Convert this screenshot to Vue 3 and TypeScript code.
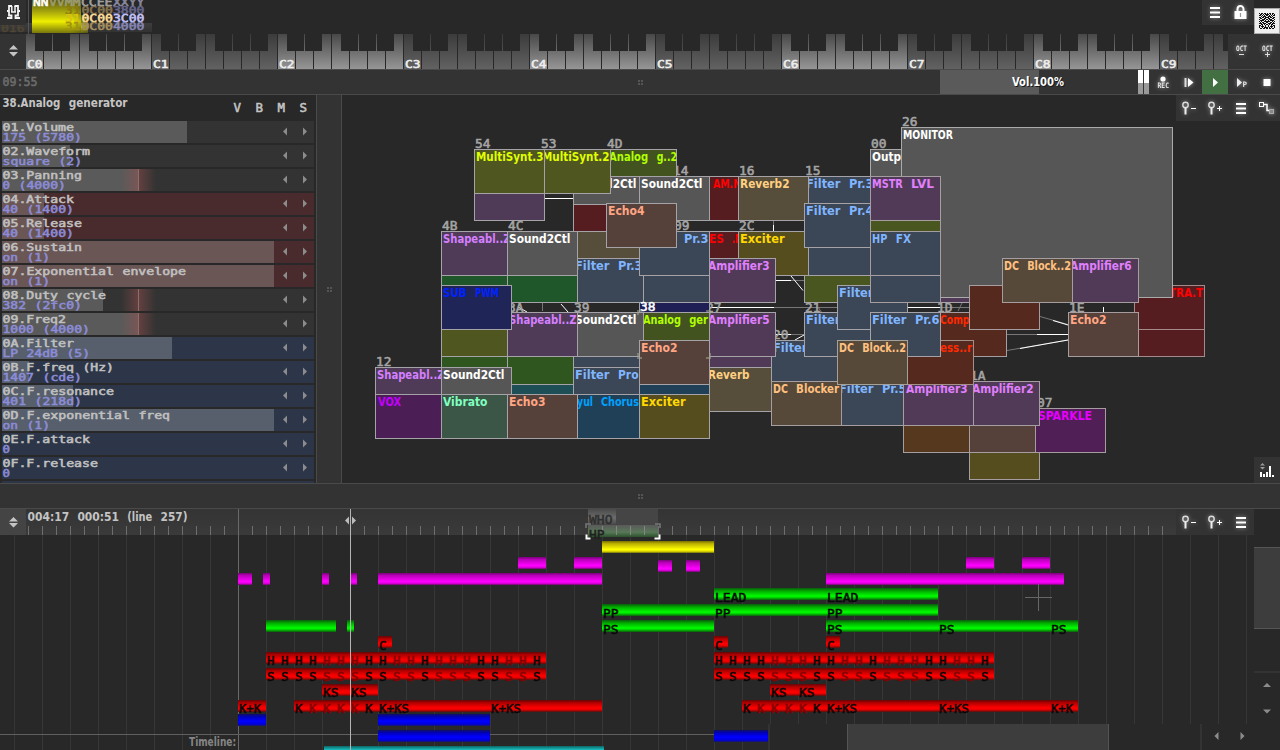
<script setup lang="ts">
import { h } from 'vue'

/* ---------- pixel-like text: every word is fitted to the bitmap font's advance widths ---------- */
type Kind = 'prop' | 'mono' | 'wide'
interface PxProps { t: string; x: number; y: number; kind?: Kind; fill?: string; w?: number }

const narrow: Record<string, number> = { i: 4, l: 4, I: 5, '.': 3, ':': 3, '(': 4, ')': 4, t: 6, f: 6, r: 6, k: 6 }
function advance(c: string, kind: Kind): number {
  if (kind !== 'prop') return 8
  if (narrow[c]) return narrow[c]
  return c >= 'a' && c <= 'z' && c !== 'm' ? 7 : 8
}
function words(t: string, kind: Kind) {
  const out: { t: string; x: number; w: number }[] = []
  let x = 0
  for (const part of t.split(' ')) {
    let w = 0
    for (const c of part) w += advance(c, kind)
    if (part) out.push({ t: part, x, w: w - 0.5 })
    x += w + 8
  }
  return out
}
const Px = (p: PxProps) => {
  const kind: Kind = p.kind ?? 'prop'
  const list = words(p.t, kind)
  const last = list[list.length - 1]
  const k = p.w ? p.w / (last.x + last.w) : 1
  const fill = p.fill ?? '#c4c4c4'
  return h('g', { class: 'px px-' + kind, fill, stroke: kind === 'prop' ? 'none' : fill },
    list.map(o => h('text', { x: p.x + o.x * k, y: p.y, textLength: o.w * k, lengthAdjust: 'spacingAndGlyphs' }, o.t)))
}
Px.props = ['t', 'x', 'y', 'kind', 'fill', 'w']

/* ---------- keyboard ---------- */
const octaves = Array.from({ length: 10 }, (_, i) => i)
const blacks = [9, 27, 63, 81, 99]

/* ---------- controllers ---------- */
const params = [
  { n: '01.Volume', v: '175 (5780)', f: 185, c: 'gray' },
  { n: '02.Waveform', v: 'square (2)', f: 68, c: 'gray' },
  { n: '03.Panning', v: '0 (4000)', f: 137, c: 'gray', mid: true },
  { n: '04.Attack', v: '40 (1400)', f: 42, c: 'red' },
  { n: '05.Release', v: '40 (1400)', f: 42, c: 'red' },
  { n: '06.Sustain', v: 'on (1)', f: 272, c: 'red' },
  { n: '07.Exponential envelope', v: 'on (1)', f: 272, c: 'red' },
  { n: '08.Duty cycle', v: '382 (2fc0)', f: 101, c: 'gray', mid: true },
  { n: '09.Freq2', v: '1000 (4000)', f: 137, c: 'gray', mid: true },
  { n: '0A.Filter', v: 'LP 24dB (5)', f: 170, c: 'blue' },
  { n: '0B.F.freq (Hz)', v: '1407 (cde)', f: 27, c: 'blue' },
  { n: '0C.F.resonance', v: '401 (218d)', f: 71, c: 'blue' },
  { n: '0D.F.exponential freq', v: 'on (1)', f: 272, c: 'blue' },
  { n: '0E.F.attack', v: '0', f: 0, c: 'blue' },
  { n: '0F.F.release', v: '0', f: 0, c: 'blue' },
  { n: '', v: '', f: 0, c: 'blue' },
]

/* ---------- module map, back to front ---------- */
const P: Record<string, [string, string]> = {
  pur: ['#4f3a57', '#d580ff'], pnk: ['#513a57', '#e080ff'], gry: ['#565656', '#ffffff'], slt: ['#3b4656', '#80b5ff'],
  red: ['#561d20', '#ff0000'], oli: ['#4f561f', '#e0ff00'], grn: ['#43531f', '#b0ff00'], dgr: ['#1f562a', '#40ff60'],
  mgr: ['#30561f', '#60ff20'], ogr: ['#49561f', '#c0ff00'], bro: ['#564d3b', '#ffd080'], dcb: ['#56493a', '#ffc080'],
  ech: ['#56413a', '#ffa583'], blu: ['#1f2556', '#0022ff'], nav: ['#1f1f56', '#0000ff'], vox: ['#4b1f56', '#c400ff'],
  vib: ['#3b5647', '#80ffc0'], cho: ['#1f4056', '#00a0ff'], tea: ['#1f4f56', '#00e0ff'], exc: ['#564d1f', '#ffd900'],
  cmp: ['#56291f', '#ff2a00'], org: ['#56381f', '#ff8000'], spk: ['#4f1f56', '#e600ff'],
}
type Node = [x: number, y: number, kind: string, text?: string, dx?: number, w?: number]
const nodes: Node[] = [
  [474, 176, 'pur'], [672, 176, 'red', 'AM.N', 41, 28], [672, 231, 'red', 'ES .N', 37, 33],
  [804, 258, 'ogr'], [804, 231, 'slt'], [804, 176, 'slt', 'Filter Pr.3'], [738, 231, 'exc', 'Exciter'],
  [738, 176, 'bro', 'Reverb2'], [804, 203, 'slt', 'Filter Pr.4'],
  [705, 340, 'pnk'], [705, 367, 'bro', 'Reverb', 3],
  [771, 340, 'slt', 'Filter'], [804, 312, 'slt', 'Filter'], [837, 285, 'slt', 'Filter'],
  [606, 149, 'grn', 'Analog g..2', 3, 68], [573, 176, 'gry', 'Sound2Ctl'], [573, 204, 'red'], [573, 231, 'bro'],
  [540, 149, 'oli', 'MultiSynt.2'], [474, 149, 'oli', 'MultiSynt.3'], [639, 176, 'gry', 'Sound2Ctl'],
  [705, 258, 'pnk', 'Amplifier3', 3], [639, 258, 'slt'], [573, 258, 'slt', 'Filter Pr.3'], [639, 231, 'slt', 'Filter Pr.3'],
  [606, 203, 'ech', 'Echo4'],
  [441, 258, 'dgr'], [507, 258, 'dgr'], [441, 231, 'pur', 'Shapeabl..Z'], [507, 231, 'gry', 'Sound2Ctl'],
  [441, 340, 'mgr'], [507, 367, 'tea'], [507, 340, 'mgr'], [573, 340, 'slt'], [639, 367, 'cho'],
  [441, 312, 'oli'], [705, 312, 'pnk', 'Amplifier5', 3],
  [639, 312, 'grn', 'Analog ger', 4, 65], [573, 312, 'gry', 'Sound2Ctl'], [507, 312, 'pur', 'Shapeabl..Z'],
  [441, 285, 'blu', 'SUB PWM', 2, 56], [573, 367, 'slt', 'Filter Pro'], [639, 367, 'cho'], [639, 340, 'ech', 'Echo2'],
  [375, 367, 'pur', 'Shapeabl..Z'], [441, 367, 'gry', 'Sound2Ctl'],
  [375, 394, 'vox', 'VOX', 3, 23], [441, 394, 'vib', 'Vibrato'], [573, 394, 'cho', 'yul Chorus', 4, 62], [507, 394, 'ech', 'Echo3'], [639, 394, 'exc', 'Exciter'],
]
const nodesFront: Node[] = [
  [870, 204, 'ogr'], [870, 176, 'pnk', 'MSTR LVL', 2, 62],
  [870, 258, 'slt'], [870, 231, 'slt', 'HP FX', 2, 39],
  [936, 312, 'cmp', 'Compr', 4, 34],
  [837, 381, 'slt', 'Filter Pr.5'], [771, 381, 'dcb', 'DC Blocker', 2, 66],
  [903, 408, 'org'], [969, 435, 'exc'], [969, 408, 'ech'], [1035, 408, 'spk', 'SPARKLE', 3, 54],
  [969, 381, 'pnk', 'Amplifier2', 3], [903, 381, 'pnk', 'Amplifier3', 3],
  [969, 285, 'cmp'], [1068, 312, 'ech', 'Echo2'], [1068, 258, 'pnk', 'Amplifier6'], [1002, 258, 'dcb', 'DC Block..2', 2, 67],
]
const labels: [string, number, number][] = [
  ['54', 475, 149], ['53', 541, 149], ['4D', 607, 149], ['14', 673, 176], ['16', 739, 176], ['15', 805, 176], ['00', 871, 149],
  ['26', 902, 127], ['4B', 442, 231], ['4C', 508, 231], ['09', 674, 231], ['2C', 739, 231], ['12', 376, 367], ['3A', 508, 313],
  ['39', 574, 313], ['27', 706, 313], ['21', 805, 313], ['20', 773, 340], ['1D', 937, 313], ['1E', 1069, 313], ['1A', 970, 381], ['07', 1037, 408],
]
const texty = (n: Node) => n[1] + 12

/* ---------- timeline ---------- */
type Clip = [x1: number, x2: number, y: number, g: string]
const clips: Clip[] = [
  [602, 714, 541, 'ye'],
  [518, 546, 557, 'ma'], [574, 602, 557, 'ma'], [966, 994, 557, 'ma'], [1022, 1050, 557, 'ma'], [658, 672, 560, 'ma'], [686, 700, 560, 'ma'],
  [238, 252, 573, 'ma'], [263, 270, 573, 'ma'], [322, 329, 573, 'ma'], [351, 357, 573, 'ma'], [378, 602, 573, 'ma'], [826, 1064, 573, 'ma'],
  [714, 938, 588, 'gr'], [602, 938, 604, 'gr'],
  [266, 336, 620, 'gr'], [347, 354, 620, 'gr'], [602, 714, 620, 'gr'], [826, 1078, 620, 'gr'],
  [378, 392, 636, 're'], [714, 728, 636, 're'], [826, 840, 636, 're'],
  [266, 546, 652, 're'], [714, 994, 652, 're'], [266, 546, 668, 're'], [714, 994, 668, 're'],
  [322, 378, 684, 're'], [770, 826, 684, 're'],
  [238, 266, 700, 're'], [294, 602, 700, 're'], [742, 1078, 700, 're'],
  [238, 266, 714, 'bl'], [378, 490, 714, 'bl'], [378, 490, 730, 'bl'], [714, 768, 730, 'bl'],
  [324, 604, 746, 'te'],
]
const tags: { t: string; x: number; y: number; dim?: boolean }[] = []
const tag = (t: string, y: number, xs: number[]) => xs.forEach(x => tags.push({ t, x: x + 1, y }))
tag('LEAD', 602, [714, 826])
tag('PP', 618, [602, 714, 826])
tag('PS', 634, [602, 826, 938, 1050])
tag('C', 650, [378, 714, 826])
tag('KS', 697, [322, 350, 770, 798])
tag('K+K', 713, [238, 1050])
tag('K+KS', 713, [378, 490, 826, 938])
const dark = [0, 1, 2, 3, 7, 8, 11, 15, 16, 19]
for (const base of [266, 714]) {
  for (let i = 0; i < 20; i++) {
    tags.push({ t: 'H', x: base + i * 14 + 1, y: 665, dim: !dark.includes(i) })
    tags.push({ t: 'S', x: base + i * 14 + 1, y: 681, dim: !dark.includes(i) })
  }
  for (let i = 0; i < 6; i++) tags.push({ t: 'K', x: base + 28 + i * 14 + 1, y: 713, dim: i > 0 && i < 5 })
}
const tagWidth = (t: string) => (t === 'K+K' ? 22 : t === 'K+KS' ? 30 : undefined)
const ticks = Array.from({ length: 82 }, (_, i) => 28 + i * 14)
const grid = Array.from({ length: 45 }, (_, i) => 14 + i * 28)

const qr = ['1011011010110110', '0110101111010101', '1101010110101011', '0010111001110100', '1101101111011011', '0110011001100110', '1001110110111001', '0111101001011110',
  '1010011111100101', '0101100110011010', '1110111001110111', '0011010110101100', '1101001001001011', '1011101001011101', '1001011110101001', '0110110110110110']
const qrPath = qr.map((r, y) => [...r].map((c, x) => (c === '1' ? `M${x} ${y}h1v1h-1z` : '')).join('')).join('')
</script>

<template>
  <div class="app">
    <header class="top">
      <svg class="pattern" width="160" height="34">
        <defs>
          <linearGradient id="cursor" x1="0" y1="0" x2="0" y2="1">
            <stop offset="0" stop-color="#5d5c12" /><stop offset=".35" stop-color="#a5a40d" /><stop offset=".65" stop-color="#eeee00" /><stop offset="1" stop-color="#77760c" />
          </linearGradient>
          <linearGradient id="cfade" x1="0" y1="0" x2="1" y2="0">
            <stop offset="0" stop-color="#fff" /><stop offset=".7" stop-color="#fff" /><stop offset="1" stop-color="#777" />
          </linearGradient>
          <linearGradient id="rowfade" x1="0" y1="0" x2="0" y2="1">
            <stop offset="0" stop-color="#3e3e3e" /><stop offset="1" stop-color="#323232" />
          </linearGradient>
          <mask id="cmask"><rect x="30" y="0" width="60" height="34" fill="url(#cfade)" /></mask>
        </defs>
        <rect x="0" y="23" width="152" height="9" fill="url(#rowfade)" />
        <rect x="32" y="0" width="49" height="33" fill="url(#cursor)" mask="url(#cmask)" />
        <rect x="81" y="15" width="7" height="18" fill="url(#cursor)" mask="url(#cmask)" />
        <rect x="28" y="0" width="1" height="34" fill="#555" />
        <g class="tiny">
          <Px t="NN" :x="33" :y="6" kind="wide" fill="#fff" />
          <Px t="VVMM" :x="49" :y="6" kind="wide" fill="#9d9c72" />
          <Px t="CCEE" :x="81" :y="6" kind="wide" fill="#a0a0a0" />
          <Px t="XXYY" :x="113" :y="6" kind="wide" fill="#8a8aa0" />
          <Px t="31" :x="65" :y="13.700" kind="wide" fill="#8c7b10" /><Px t="0C00" :x="81.500" :y="13.700" kind="wide" fill="#8a7650" /><Px t="3800" :x="113" :y="13.700" kind="wide" fill="#686890" />
          <Px t="31" :x="65" :y="22" kind="wide" fill="#d9c312" /><Px t="0C00" :x="81.500" :y="22" kind="wide" fill="#ffdf9a" /><Px t="3C00" :x="113" :y="22" kind="wide" fill="#c5c5ff" />
          <Px t="31" :x="65" :y="30" kind="wide" fill="#a39410" /><Px t="0C00" :x="81.500" :y="30" kind="wide" fill="#a9915e" /><Px t="4000" :x="113" :y="30" kind="wide" fill="#8787b8" />
          <Px t="016" :x="1" :y="32" kind="wide" fill="#4f4634" />
        </g>
      </svg>
      <div class="logo">
        <svg width="26" height="25" fill="none" stroke="#f4f4f4" stroke-width="1.800">
          <path d="M12 6H9v5H7M9 11v4.500h2.500v2.500H7M14.500 6h3.500v5h2M18 11v4.500h-2.500v2.500H20" />
          <path d="M11.800 6v6M15 6v6M11 12h5" stroke-width="1.500" />
        </svg>
      </div>
      <div class="topbtns">
        <svg class="glow" width="26" height="25"><path d="M8 8h10M8 12.500h10M8 17h10" stroke="#fff" stroke-width="2" /></svg>
        <svg class="glow" width="26" height="25"><path d="M9.500 12V9a3 3 0 0 1 6 0v3" fill="none" stroke="#fff" stroke-width="2" /><rect x="6.500" y="11" width="12" height="8" fill="#fff" /><path d="M12.500 13v4" stroke="#999" stroke-width="1.200" /></svg>
      </div>
      <div class="qr"><svg width="16" height="16" shape-rendering="crispEdges"><path :d="qrPath" fill="#111" /></svg></div>
    </header>

    <div class="kbd">
      <div class="updown"><svg width="26" height="35"><path d="M9 15.500l4.500-4.500 4.500 4.500zM9 18l4.500 4.500L18 18z" fill="#c4c4c4" /></svg></div>
      <div class="keys">
        <div v-for="o in octaves" :key="o" class="octave" :class="{ light: o % 2 === 0 }">
          <i v-for="k in 7" :key="k" class="white" />
          <i v-for="b in blacks" :key="b" class="black" :style="{ left: b + 'px' }" />
          <svg class="oname" width="20" height="14"><Px :t="'C' + o" :x="1" :y="12.500" kind="wide" fill="#eee" :w="15.500" /></svg>
        </div>
      </div>
      <div class="octbtns">
        <svg width="26" height="35"><g class="micro glow"><text x="8" y="17" textLength="11" lengthAdjust="spacingAndGlyphs">OCT</text><path d="M11 20.500h5" stroke="#ddd" /></g></svg>
        <svg width="26" height="35"><g class="micro glow"><text x="8" y="17" textLength="11" lengthAdjust="spacingAndGlyphs">OCT</text><path d="M11 20.500h5M13.500 18v5" stroke="#ddd" /></g></svg>
      </div>
    </div>

    <div class="transport">
      <svg class="clock" width="60" height="24"><Px t="09:55" :x="2.500" :y="16" kind="mono" fill="#6c6c6c" :w="35" /></svg>
      <i class="dots dots-a" />
      <div class="volume">
        <div class="volfill" />
        <svg width="198" height="24"><Px t="Vol.100%" :x="73" :y="17" fill="#1a1a1a" :w="52" /><Px t="Vol.100%" :x="72" :y="16" fill="#fff" :w="52" /></svg>
      </div>
      <div class="meters"><i /><i /></div>
      <svg class="glow" width="26" height="24"><circle cx="13" cy="9" r="2.600" fill="#fff" /><g class="micro"><text x="7.500" y="18" textLength="11.500" lengthAdjust="spacingAndGlyphs">REC</text></g></svg>
      <svg class="glow" width="26" height="24"><path d="M9.500 8v9" stroke="#ddd" stroke-width="2" /><path d="M12 8l5.500 4.500L12 17z" fill="#fff" /></svg>
      <svg class="playing" width="26" height="24"><path d="M11 8l5 4.500-5 4.500z" fill="#fff" /></svg>
      <svg class="glow" width="26" height="24"><path d="M9 8l5 4.500L9 17z" fill="#eee" /><g class="micro"><text x="14.500" y="17">P</text></g></svg>
      <svg class="glow" width="26" height="24"><rect x="9.500" y="9" width="7" height="7" fill="#fff" /></svg>
    </div>

    <div class="middle">
      <section class="panel">
        <div class="ptitle">
          <svg width="316" height="26">
            <Px t="38.Analog generator" :x="2.500" :y="12" :w="125" />
            <Px v-for="(c, i) in ['V', 'B', 'M', 'S']" :key="c" :t="c" :x="233.500 + i * 22" :y="17" kind="mono" />
          </svg>
        </div>
        <div v-for="p in params" :key="p.n" class="param" :class="p.c">
          <div class="pfill" :style="{ width: p.f + 'px' }" />
          <div v-if="p.mid" class="pmid" />
          <svg width="312" height="22">
            <template v-if="p.n">
              <Px :t="p.n" :x="0.500" :y="10.300" kind="wide" fill="#c0c0c0" />
              <Px :t="p.v" :x="0.500" :y="19.500" kind="wide" fill="#8c8cd8" />
              <path d="M285 6.500v8l-4-4zM301 6.500v8l4-4z" fill="#8c8c8c" />
            </template>
          </svg>
        </div>
      </section>
      <div class="splitv"><i class="dots" /></div>
      <section class="map">
        <svg width="938" height="388" viewBox="342 95 938 388">
          <g fill="none" stroke="#777">
            <path d="M790 280.500h14M773 307.500h64M783 334.500h21M940 307.500h29M1040 316.500l28 8M1007 334.500h61M1007 350.500l61-10.500M542.500 303v8M773.500 221v9M818 307l4 6M962 303l-4 8" />
          </g>
          <g fill="none" stroke="#fff">
            <path d="M545 198.500h28M776 280.500h15M710 307.500h64M776 334.500h15M908 307.500h32M1053 320.500l15 4.500M1037 334.500h31M1020 348.500l48-8.500M791 276l12 14.500M561 304l7 8M518 307l9 5M773.500 225v6M795 340l9-5M1103.500 307v6" />
          </g>
          <Px v-for="l in labels" :key="l[0]" :t="l[0]" :x="l[1]" :y="l[2] - 1" kind="mono" fill="#a5a5a5" />
          <rect x="639.500" y="285.500" width="70" height="44" fill="#1f1f56" stroke="#a6a2ab" />
          <g v-for="(n, i) in nodes" :key="'a' + i">
            <rect :x="n[0] + 0.500" :y="n[1] + 0.500" width="70" height="44" :fill="P[n[2]][0]" stroke="#a5a3a8" />
            <Px v-if="n[3]" :t="n[3]" :x="n[0] + (n[4] ?? 2)" :y="texty(n)" :fill="P[n[2]][1]" :w="n[5]" />
          </g>
          <Px t="38" :x="640" :y="311" kind="mono" fill="#fff" />
          <rect x="870.500" y="149.500" width="70" height="44" fill="#565656" stroke="#aaa" />
          <Px t="Outp" :x="872" :y="161" fill="#fff" :w="29" />
          <rect x="1134.500" y="312.500" width="70" height="44" fill="#561d20" stroke="#a58a8c" />
          <rect x="1134.500" y="285.500" width="70" height="44" fill="#561d20" stroke="#a58a8c" />
          <Px t="TRA.T" :x="1169" :y="297" fill="#f00" :w="34" />
          <rect x="936.500" y="258.500" width="70" height="44" fill="#513a57" stroke="#a9a0ab" />
          <rect x="901.500" y="127.500" width="271" height="170" fill="#565656" stroke="#aaa" />
          <Px t="MONITOR" :x="903" :y="139" fill="#fff" :w="50" />
          <g v-for="(n, i) in nodesFront" :key="'b' + i">
            <rect :x="n[0] + 0.500" :y="n[1] + 0.500" width="70" height="44" :fill="P[n[2]][0]" stroke="#a59d9f" />
            <Px v-if="n[3]" :t="n[3]" :x="n[0] + (n[4] ?? 2)" :y="texty(n)" :fill="P[n[2]][1]" :w="n[5]" />
          </g>
          <rect x="903.500" y="340.500" width="70" height="44" fill="#56291f" stroke="#a59089" />
          <Px t="ess..r" :x="940" :y="352" fill="#ff2a00" :w="32" />
          <rect x="870.500" y="312.500" width="70" height="44" fill="#3b4656" stroke="#a5a3a8" />
          <Px t="Filter Pr.6" :x="872" :y="324" fill="#80b5ff" />
          <rect x="837.500" y="340.500" width="70" height="44" fill="#56493a" stroke="#a5a098" />
          <Px t="DC Block..2" :x="839" :y="352" fill="#ffc080" :w="67" />
          <path d="M638 315v-4h4M706 311h4v4M638 353v5h4M706 358h4v-5" fill="none" stroke="#a0a890" stroke-width="2" opacity=".55" />
        </svg>
        <div class="maptools">
          <svg class="glow" width="26" height="26"><circle cx="9.500" cy="10" r="2.700" fill="none" stroke="#ddd" stroke-width="1.400" /><path d="M9.500 12.500v7" stroke="#eee" stroke-width="2" /><path d="M15 13.500h5" stroke="#fff" /></svg>
          <svg class="glow" width="26" height="26"><circle cx="9.500" cy="10" r="2.700" fill="none" stroke="#ddd" stroke-width="1.400" /><path d="M9.500 12.500v7" stroke="#eee" stroke-width="2" /><path d="M15 13.500h5M17.500 11v5" stroke="#fff" /></svg>
          <svg class="glow" width="26" height="26"><path d="M8 9h10M8 13.500h10M8 18h10" stroke="#fff" stroke-width="2" /></svg>
          <svg class="glow" width="26" height="26" fill="none"><rect x="5.500" y="7.500" width="4" height="4" stroke="#fff" /><path d="M10 9.500h3v6h3" stroke="#fff" stroke-width="1.500" /><rect x="15.500" y="14.500" width="4" height="4" fill="#888" stroke="#aaa" /></svg>
        </div>
        <div class="levels">
          <svg width="26" height="26"><path d="M6 8.500L8.500 6 11 8.500zM6 10L8.500 12.500 11 10z" fill="#999" /><path d="M7 15v5M10 17v3M13 15v5M16 9v11M19 18v2" stroke="#fff" stroke-width="2" /></svg>
        </div>
      </section>
    </div>

    <div class="splith"><i class="dots" /></div>

    <div class="timeline">
      <svg class="tracks" width="1280" height="241" viewBox="0 509 1280 241">
        <defs>
          <linearGradient id="hd" x1="0" y1="0" x2="0" y2="1"><stop offset="0" stop-color="#343434" /><stop offset="1" stop-color="#3a3a3a" /></linearGradient>
          <linearGradient id="ma" x1="0" y1="0" x2="0" y2="1"><stop offset="0" stop-color="#770077" /><stop offset=".22" stop-color="#bb00bb" /><stop offset=".7" stop-color="#f0f" /><stop offset=".85" stop-color="#e800e8" /><stop offset="1" stop-color="#6a0a6a" /></linearGradient>
          <linearGradient id="ye" x1="0" y1="0" x2="0" y2="1"><stop offset="0" stop-color="#776f00" /><stop offset=".22" stop-color="#bbb000" /><stop offset=".7" stop-color="#ff0" /><stop offset=".85" stop-color="#e8e000" /><stop offset="1" stop-color="#6a6a10" /></linearGradient>
          <linearGradient id="gr" x1="0" y1="0" x2="0" y2="1"><stop offset="0" stop-color="#0a5a0a" /><stop offset=".25" stop-color="#0a0" /><stop offset=".68" stop-color="#0f0" /><stop offset=".8" stop-color="#00d000" /><stop offset="1" stop-color="#0c5a0c" /></linearGradient>
          <linearGradient id="re" x1="0" y1="0" x2="0" y2="1"><stop offset="0" stop-color="#600808" /><stop offset=".22" stop-color="#b00000" /><stop offset=".65" stop-color="#f00" /><stop offset=".8" stop-color="#e80000" /><stop offset="1" stop-color="#501010" /></linearGradient>
          <linearGradient id="bl" x1="0" y1="0" x2="0" y2="1"><stop offset="0" stop-color="#101060" /><stop offset=".25" stop-color="#0000c0" /><stop offset=".6" stop-color="#00f" /><stop offset=".85" stop-color="#0000d8" /><stop offset="1" stop-color="#1a1a60" /></linearGradient>
          <linearGradient id="te" x1="0" y1="0" x2="0" y2="1"><stop offset="0" stop-color="#0c6464" /><stop offset=".3" stop-color="#18b8b8" /><stop offset="1" stop-color="#1cc" /></linearGradient>
          <linearGradient id="sel" x1="0" y1="0" x2="0" y2="1"><stop offset="0" stop-color="#4a4a4a" /><stop offset=".6" stop-color="#6c6c6c" /><stop offset="1" stop-color="#4c4c4c" /></linearGradient>
          <linearGradient id="sel2" x1="0" y1="0" x2="0" y2="1"><stop offset="0" stop-color="#5a5a5a" /><stop offset=".6" stop-color="#587858" /><stop offset="1" stop-color="#2c522c" /></linearGradient>
        </defs>
        <path v-for="x in grid" :key="'g' + x" :d="`M${x}.5 535V750`" stroke="#363636" />
        <rect x="0" y="509" width="1254" height="26" fill="url(#hd)" />
        <path v-for="x in ticks" :key="'t' + x" :d="`M${x}.5 526V535`" stroke="#6e6e6e" />
        <path d="M238.500 509V750" stroke="#696969" />
        <path d="M0 734.500H768" stroke="#606060" />
        <rect v-for="(c, i) in clips" :key="'c' + i" :x="c[0]" :y="c[2]" :width="c[1] - c[0]" height="12" :fill="`url(#${c[3]})`" />
        <Px v-for="(g, i) in tags" :key="'n' + i" :t="g.t" :x="g.x" :y="g.y" kind="mono" :fill="g.dim ? '#850000' : '#080808'" :w="tagWidth(g.t)" />
        <rect x="588" y="509" width="70" height="26" fill="#454545" />
        <rect x="588" y="509" width="28" height="15" fill="url(#sel)" />
        <rect x="588" y="525" width="70" height="12" fill="url(#sel2)" />
        <path v-for="x in [602, 616, 630, 644]" :key="'s' + x" :d="`M${x}.5 526V535`" stroke="#858585" />
        <Px t="WHO" :x="589" :y="523.500" kind="mono" fill="#303030" />
        <Px t="HP" :x="589" :y="539" kind="mono" fill="#202020" />
        <path d="M586 528v-4h5M655 524h5v4" fill="none" stroke="#777" stroke-width="1.500" />
        <path d="M586.500 534.500v4h4M654.500 538.500h5v-4" fill="none" stroke="#fff" stroke-width="2" />
        <Px t="004:17 000:51 (line 257)" :x="27.500" :y="521" :w="160" />
        <Px t="Timeline:" :x="189" :y="746" fill="#858585" :w="47" />
        <path d="M350.500 509V750" stroke="#b5b5b5" />
        <path d="M345 520.500l4-4v8zM356 520.500l-4-4v8z" fill="#bbb" />
        <path d="M1038.500 584v27M1025 597.500h27" stroke="#666" />
      </svg>
      <div class="tlhandle"><svg width="26" height="26"><path d="M9 12.500l4.500-4.500 4.500 4.500zM9 14l4.500 4.500L18 14z" fill="#c4c4c4" /></svg></div>
      <div class="tltools">
        <svg class="glow" width="26" height="26"><circle cx="9.500" cy="10" r="2.700" fill="none" stroke="#ddd" stroke-width="1.400" /><path d="M9.500 12.500v7" stroke="#eee" stroke-width="2" /><path d="M15 13.500h5" stroke="#fff" /></svg>
        <svg class="glow" width="26" height="26"><circle cx="9.500" cy="10" r="2.700" fill="none" stroke="#ddd" stroke-width="1.400" /><path d="M9.500 12.500v7" stroke="#eee" stroke-width="2" /><path d="M15 13.500h5M17.500 11v5" stroke="#fff" /></svg>
        <svg class="glow" width="26" height="26"><path d="M8 9h10M8 13.500h10M8 18h10" stroke="#fff" stroke-width="2" /></svg>
      </div>
      <div class="vscroll"><div class="vthumb" />
        <svg width="26" height="51"><path d="M9 14l4-4 4 4zM9 36.500l4 4 4-4z" fill="#8c8c8c" /></svg>
      </div>
      <div class="hscroll"><div class="hthumb" />
        <svg width="53" height="26"><path d="M16.500 8v8l-4-4zM38.500 8v8l4-4z" fill="#8c8c8c" /></svg>
      </div>
    </div>
  </div>
</template>

<style>
html, body { margin: 0; background: #282828; overflow: hidden; }
.px-prop { font: bold 12.500px "DejaVu Sans Condensed", "DejaVu Sans", sans-serif; }
.px-mono { font: 12.500px "DejaVu Sans Mono", monospace; stroke-width: 0.550px; }
.px-wide { font: 9.600px "DejaVu Sans Mono", monospace; stroke-width: 0.500px; }
.px { user-select: none; }
</style>

<style scoped>
.app { width: 1280px; height: 750px; background: #282828; display: flex; flex-direction: column; overflow: hidden; }
svg { display: block; }
.glow { filter: drop-shadow(0 0 2px rgba(255, 255, 255, 0.500)); }
.micro { font: bold 7.500px "DejaVu Sans Mono", monospace; fill: #e4e4e4; }

.top { height: 34px; flex: none; display: flex; justify-content: flex-end; position: relative; overflow: hidden; }
.pattern { position: absolute; left: 0; top: 0; }
.logo { position: absolute; left: 0; top: 0; width: 26px; height: 25px; background: #303030; }
.topbtns { display: flex; width: 52px; height: 25px; background: #333; }
.qr { width: 24px; height: 24px; margin-top: 8px; border: 1px solid #aaa; background: #eee; display: flex; align-items: center; justify-content: center; }

.kbd { height: 35px; flex: none; display: flex; background: #333; }
.updown { width: 26px; }
.keys { width: 1202px; display: flex; overflow: hidden; background: #282828; }
.octave { position: relative; width: 126px; flex: none; display: flex; }
.white { width: 17px; margin-right: 1px; background: linear-gradient(#3b3b3b, #626262); }
.light .white { background: linear-gradient(#484848, #969696); }
.black { position: absolute; top: 0; width: 17px; height: 17px; background: #282828; }
.oname { position: absolute; left: 0; bottom: 0; }
.octbtns { display: flex; width: 52px; }

.transport { height: 24px; flex: none; display: flex; position: relative; background: #333; border-top: 1px solid #4a4a4a; border-bottom: 1px solid #4a4a4a; }
.clock { margin-right: auto; }
.volume { position: relative; width: 198px; background: #333; }
.volfill { position: absolute; left: 0; top: 0; width: 99px; height: 24px; background: #5a5a5a; }
.volume svg { position: relative; }
.meters { display: flex; gap: 1px; width: 12px; }
.meters i { width: 5px; height: 24px; background: linear-gradient(#fff 13px, #999 13px); }
.playing { background: #427042; }

.dots { width: 5px; height: 5px; background:
  linear-gradient(#555, #555) 0 0 / 2px 2px no-repeat, linear-gradient(#555, #555) 3px 0 / 2px 2px no-repeat,
  linear-gradient(#555, #555) 0 3px / 2px 2px no-repeat, linear-gradient(#555, #555) 3px 3px / 2px 2px no-repeat; }
.dots-a { position: absolute; left: 638px; top: 10px; }

.middle { height: 388px; flex: none; display: flex; }
.panel { width: 316px; height: 388px; overflow: hidden; }
.ptitle { height: 26px; }
.param { position: relative; width: 312px; height: 22px; margin: 0 0 2px 2px; }
.param svg { position: relative; }
.pfill { position: absolute; left: 0; top: 0; height: 22px; }
.pmid { position: absolute; left: 119px; top: 0; width: 35px; height: 22px; background:
  linear-gradient(#8d6c6c, #8d6c6c) 17px 0 / 1px 22px no-repeat,
  linear-gradient(90deg, rgba(160, 80, 80, 0), rgba(160, 80, 80, 0.450) 50%, rgba(120, 60, 60, 0)); }
.gray { background: #333; } .gray .pfill { background: #5a5a5a; }
.red { background: #4a2b2d; } .red .pfill { background: #6b5656; }
.blue { background: #2c3648; } .blue .pfill { background: #575f6c; }
.splitv { width: 24px; border-left: 1px solid #4a4a4a; border-right: 1px solid #4a4a4a; background: #333; display: flex; align-items: center; justify-content: center; }
.map { position: relative; width: 938px; height: 388px; }
.maptools { position: absolute; right: 0; top: 0; height: 26px; display: flex; background: #333; }
.levels { position: absolute; right: 0; bottom: 0; background: #333; }

.splith { height: 24px; flex: none; border-top: 1px solid #4a4a4a; border-bottom: 1px solid #4a4a4a; background: #333; display: flex; align-items: center; justify-content: center; }
.timeline { position: relative; height: 241px; flex: none; }
.tlhandle { position: absolute; left: 0; top: 0; width: 26px; height: 26px; background: #444; }
.tltools { position: absolute; left: 1176px; top: 0; display: flex; height: 26px; background: #333; }
.vscroll { position: absolute; right: 0; top: 0; width: 26px; height: 215px; background: #282828; display: flex; flex-direction: column; justify-content: space-between; }
.vthumb { margin-top: 38px; height: 80px; background: #3d3d3d; border-top: 1px solid #555; border-bottom: 1px solid #555; }
.vscroll svg { border-top: 2px solid #333; }
.hscroll { position: absolute; left: 768px; bottom: 0; width: 510px; height: 26px; background: #282828; border-left: 2px solid #333; display: flex; }
.hthumb { margin-left: 77px; width: 260px; background: #3d3d3d; border-left: 1px solid #555; border-right: 1px solid #555; }
.hscroll svg { margin-left: 91px; border-left: 2px solid #333; }
</style>
